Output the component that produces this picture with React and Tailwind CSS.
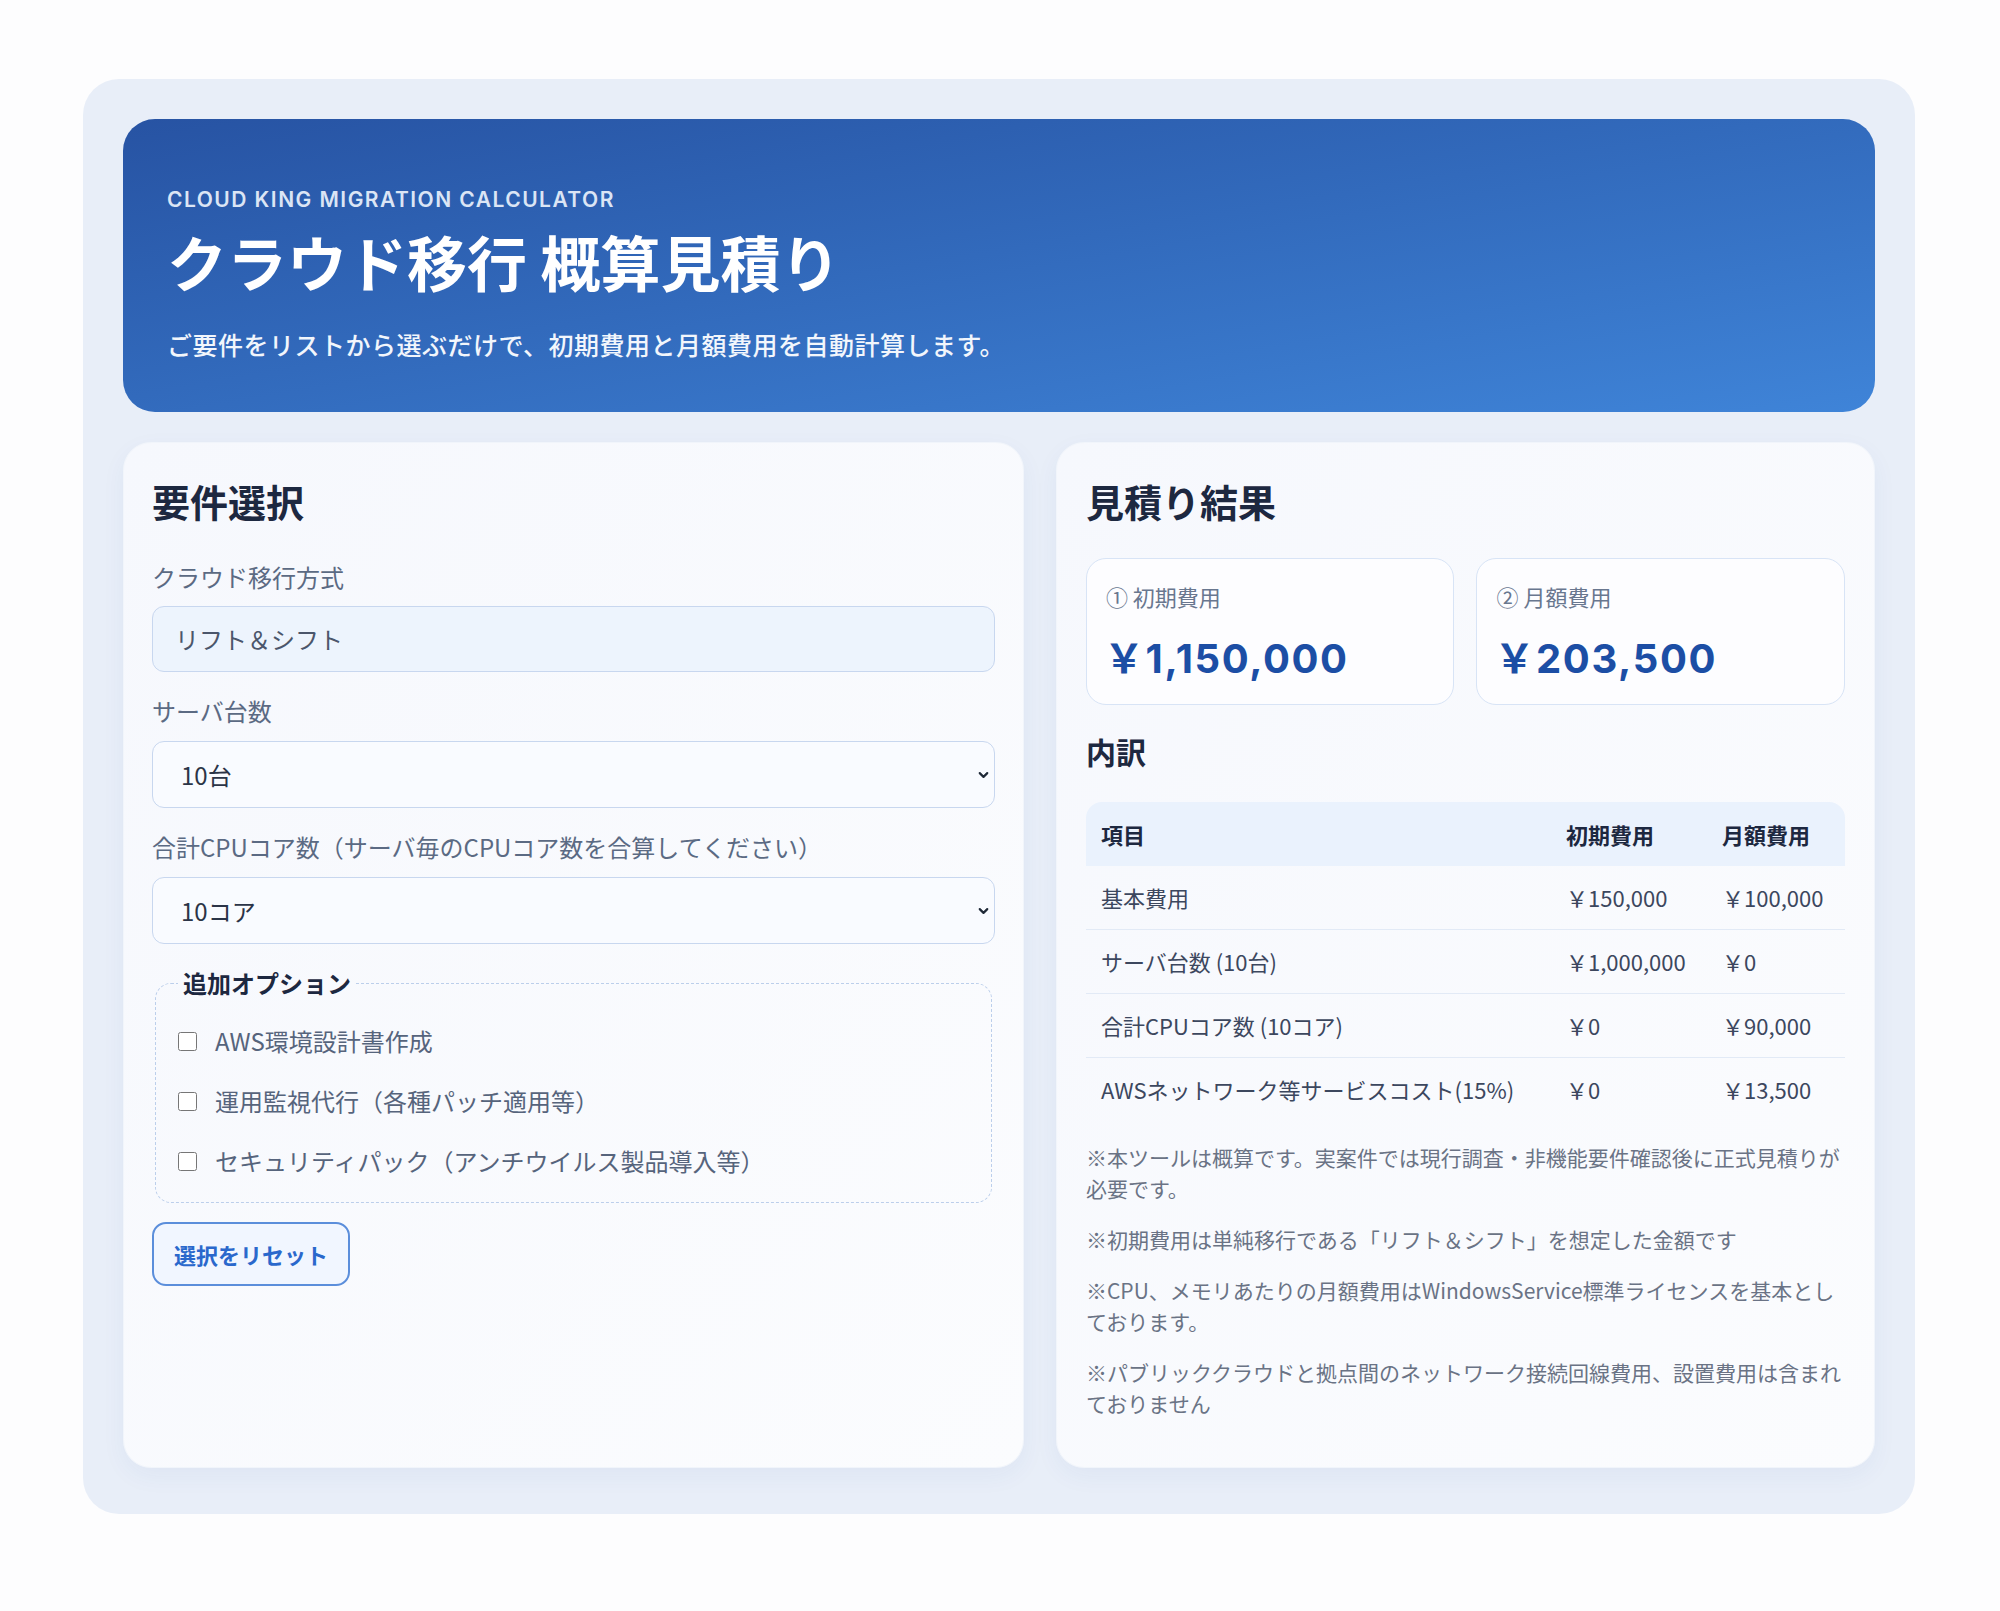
import { useState } from 'react'
import { ChevronDown } from 'lucide-react'

const SERVER_OPTIONS = ['1台', '2台', '3台', '5台', '10台', '20台']
const CORE_OPTIONS = ['2コア', '4コア', '8コア', '10コア', '16コア', '32コア']

const OPTIONS = [
  'AWS環境設計書作成',
  '運用監視代行（各種パッチ適用等）',
  'セキュリティパック（アンチウイルス製品導入等）',
]

const ROWS = [
  { name: '基本費用', initial: '￥150,000', monthly: '￥100,000' },
  { name: 'サーバ台数 (10台)', initial: '￥1,000,000', monthly: '￥0' },
  { name: '合計CPUコア数 (10コア)', initial: '￥0', monthly: '￥90,000' },
  { name: 'AWSネットワーク等サービスコスト(15%)', initial: '￥0', monthly: '￥13,500' },
]

const NOTES = [
  '※本ツールは概算です。実案件では現行調査・非機能要件確認後に正式見積りが必要です。',
  '※初期費用は単純移行である「リフト＆シフト」を想定した金額です',
  '※CPU、メモリあたりの月額費用はWindowsService標準ライセンスを基本としております。',
  '※パブリッククラウドと拠点間のネットワーク接続回線費用、設置費用は含まれておりません',
]

function Select({ value, options, onChange }) {
  return (
    <div className="relative mt-[12px]">
      <select
        value={value}
        onChange={(e) => onChange(e.target.value)}
        className="w-full h-[67px] appearance-none rounded-[12px] border-[1.5px] border-[#c8d7ef] bg-[#f9fbff] pl-[28px] pr-12 text-[24px] text-[#2b3447] outline-none"
      >
        {options.map((o) => (
          <option key={o}>{o}</option>
        ))}
      </select>
      <ChevronDown
        className="pointer-events-none absolute right-[4px] top-1/2 -translate-y-1/2 text-[#1f2937]"
        size={15}
        strokeWidth={3.5}
      />
    </div>
  )
}

export default function App() {
  const [servers, setServers] = useState('10台')
  const [cores, setCores] = useState('10コア')
  const [checked, setChecked] = useState([false, false, false])

  const reset = () => {
    setServers('10台')
    setCores('10コア')
    setChecked([false, false, false])
  }

  return (
    <div className="min-h-screen bg-[#fdfdfe] pl-[83px] pr-[85px] pt-[79px] pb-[90px] font-['Noto_Sans_CJK_JP',sans-serif]">
      <div className="rounded-[36px] bg-[#e8eef8] px-10 pt-10 pb-[46px]">
        <header className="rounded-[32px] bg-linear-to-br from-[#2753a3] to-[#3f84d8] px-[44px] pt-[67px] pb-[50px] text-white">
          <p className="font-['Inter',sans-serif] text-[21px] font-semibold uppercase leading-[28px] tracking-[0.07em] text-[#dbe5f5]">
            Cloud King Migration Calculator
          </p>
          <h1 className="mt-[11px] text-[60px] font-bold leading-[72px]">クラウド移行 概算見積り</h1>
          <p className="mt-[29px] text-[25px] font-medium leading-[36px] tracking-[0.02em] text-[#f2f6fc]">
            ご要件をリストから選ぶだけで、初期費用と月額費用を自動計算します。
          </p>
        </header>

        <div className="mt-[30px] grid grid-cols-[1.1fr_1fr] gap-8">
          <section className="rounded-[28px] border border-[#f1f5fb] bg-linear-to-br from-[#f6f8fd] to-[#fbfcfe] px-[28px] pt-[33px] pb-10 shadow-[0_8px_24px_rgba(40,80,150,0.05)]">
            <h2 className="text-[38px] font-bold leading-[49px] text-[#1d2840]">要件選択</h2>

            <label className="mt-[34px] block text-[24px] leading-[36px] text-[#5b6a83]">クラウド移行方式</label>
            <div className="mt-[11px] flex h-[66px] items-center rounded-[12px] border-[1.5px] border-[#c8d7ef] bg-[#edf4fd] pl-[22px] text-[24px] text-[#4b566b]">
              リフト＆シフト
            </div>

            <label className="mt-[21px] block text-[24px] leading-[36px] text-[#5b6a83]">サーバ台数</label>
            <Select value={servers} options={SERVER_OPTIONS} onChange={setServers} />

            <label className="mt-[21px] block text-[24px] leading-[36px] text-[#5b6a83]">
              合計CPUコア数（サーバ毎のCPUコア数を合算してください）
            </label>
            <Select value={cores} options={CORE_OPTIONS} onChange={setCores} />

            <fieldset className="mx-[3px] mt-[21px] rounded-[16px] border-[1.5px] border-dashed border-[#bccfeb] pl-[22px] pr-[24px] pt-[22px] pb-[23px]">
              <legend className="px-[5px] text-[24px] font-bold leading-[36px] text-[#1d2840]">追加オプション</legend>
              <div className="flex flex-col gap-6">
                {OPTIONS.map((o, i) => (
                  <label key={o} className="flex items-center gap-[18px] text-[24px] leading-[36px] text-[#56647c]">
                    <input
                      type="checkbox"
                      checked={checked[i]}
                      onChange={() => setChecked(checked.map((c, j) => (j === i ? !c : c)))}
                      className="h-[19px] w-[19px]"
                    />
                    {o}
                  </label>
                ))}
              </div>
            </fieldset>

            <button
              type="button"
              onClick={reset}
              className="mt-[19px] h-[64px] rounded-[14px] border-2 border-[#5b8edb] bg-[#f1f6ff] px-[20px] text-[22px] font-bold text-[#2a68cc]"
            >
              選択をリセット
            </button>
          </section>

          <section className="rounded-[28px] border border-[#f1f5fb] bg-linear-to-br from-[#f6f8fd] to-[#fbfcfe] px-[29px] pt-[33px] pb-[48px] shadow-[0_8px_24px_rgba(40,80,150,0.05)]">
            <h2 className="text-[38px] font-bold leading-[49px] text-[#1d2840]">見積り結果</h2>

            <div className="mt-[33px] grid grid-cols-2 gap-[22px]">
              {[
                ['① 初期費用', '￥1,150,000'],
                ['② 月額費用', '￥203,500'],
              ].map(([label, amount]) => (
                <div
                  key={label}
                  className="rounded-[20px] border-[1.5px] border-[#d8e4f6] bg-[#fdfdff] px-6 pt-[21px] pb-[21px]"
                >
                  <div className="-ml-[5px] text-[22px] leading-[33px] text-[#69778f]">{label}</div>
                  <div className="-ml-[7px] mt-[22px] font-['Inter','Noto_Sans_CJK_JP',sans-serif] text-[40px] font-bold leading-[48px] tracking-[0.04em] text-[#1c4ea5]">
                    {amount}
                  </div>
                </div>
              ))}
            </div>

            <h3 className="mt-[25px] text-[30px] font-bold leading-[42px] text-[#1d2840]">内訳</h3>

            <table className="mt-[30px] w-full border-separate border-spacing-0 text-[22px]">
              <thead>
                <tr className="bg-[#eaf2fd] text-left text-[#1d2840]">
                  <th className="rounded-tl-[16px] px-[15px] py-[15.5px] font-bold leading-[33px]">項目</th>
                  <th className="w-[156px] px-[15px] py-[15.5px] font-bold leading-[33px]">初期費用</th>
                  <th className="w-[138px] rounded-tr-[16px] px-[15px] py-[15.5px] font-bold leading-[33px]">月額費用</th>
                </tr>
              </thead>
              <tbody className="text-[#3c475e]">
                {ROWS.map((r, i) => (
                  <tr key={r.name}>
                    <td className={`px-[15px] py-[15px] leading-[33px] ${i < ROWS.length - 1 ? 'border-b border-[#e2eaf6]' : 'pb-[16px]'}`}>{r.name}</td>
                    <td className={`px-[15px] py-[15px] leading-[33px] ${i < ROWS.length - 1 ? 'border-b border-[#e2eaf6]' : 'pb-[16px]'}`}>{r.initial}</td>
                    <td className={`px-[15px] py-[15px] leading-[33px] ${i < ROWS.length - 1 ? 'border-b border-[#e2eaf6]' : 'pb-[16px]'}`}>{r.monthly}</td>
                  </tr>
                ))}
              </tbody>
            </table>

            <div className="mt-5 flex flex-col gap-5 text-[21px] leading-[31px] text-[#6a7385]">
              {NOTES.map((n) => (
                <p key={n}>{n}</p>
              ))}
            </div>
          </section>
        </div>
      </div>
    </div>
  )
}
